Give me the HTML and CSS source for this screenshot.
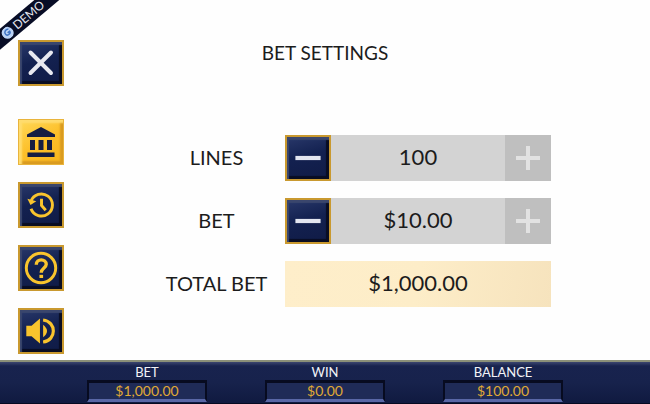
FILE: index.html
```html
<!DOCTYPE html>
<html lang="en">
<head>
    <meta charset="utf-8">
    <meta name="viewport" content="width=device-width, initial-scale=1">
    <title>Bet Settings</title>
    <link rel="stylesheet" href="styles.css">
</head>
<body>
    <div class="ribbon">
        <svg width="12" height="12" viewBox="0 0 12 12"><circle cx="6" cy="6" r="6" fill="#b9d2f5"/><path d="M9 3.500C6.500 1.500 3 3.500 3.500 6C4 9 8.500 8.500 8.500 6H6" fill="none" stroke="#3f74c4" stroke-width="1.500"/></svg>
        <span>DEMO</span>
    </div>

    <div class="stage">
        <nav class="menu">
            <button type="button" class="key close" aria-label="Close">
                <svg viewBox="0 0 40 40"><path d="M10 10L29.500 29.500M29.500 10L10 29.500" stroke="#e8e9f0" stroke-width="3.800" stroke-linecap="round"/></svg>
            </button>
            <button type="button" class="key active" aria-label="Bet settings">
                <svg viewBox="0 0 40 40" fill="#151d42"><path d="M20 5L34 12.500V15H6V12.500zM9 18h5v10H9zM17.500 18h5v10h-5zM26 18h5v10h-5zM6.500 30.500h27V35h-27z"/></svg>
            </button>
            <button type="button" class="key" aria-label="History">
                <svg viewBox="0 0 40 40" fill="none" stroke="#f9c42d" stroke-width="2.800"><path d="M10.500 16.500A10.500 10.500 0 1 1 10.500 23.500"/><path d="M20.500 14V20.500L24.500 25"/><path d="M7 14L10 20L15.500 16.500z" fill="#f9c42d" stroke="none"/></svg>
            </button>
            <button type="button" class="key" aria-label="Help">
                <svg viewBox="0 0 40 40" fill="none" stroke="#f9c42d"><circle cx="20" cy="20" r="14" stroke-width="2.800"/><path d="M15.500 17C15.500 10.500 25 11 25 16.500C25 20 20.200 20 20.200 24.500" stroke-width="3.200"/><path d="M18.500 26.500h3.500v3h-3.500z" fill="#f9c42d" stroke="none"/></svg>
            </button>
            <button type="button" class="key" aria-label="Sound">
                <svg viewBox="0 0 40 40" fill="#f9c42d"><path d="M6 15H11L19 8V32L11 25H6z"/><path d="M22 14Q29.500 20 22 26z"/><path d="M22 9.500C35 11 35 29 22 30.500" fill="none" stroke="#f9c42d" stroke-width="3"/></svg>
            </button>
        </nav>

        <main class="panel">
            <h1>BET SETTINGS</h1>
            <div class="settings">
                <label for="lines">LINES</label>
                <div class="stepper">
                    <button type="button" class="key" aria-label="Fewer lines">
                        <svg viewBox="0 0 40 40"><path d="M8 20H32" stroke="#e3e6f0" stroke-width="4"/></svg>
                    </button>
                    <output id="lines">100</output>
                    <button type="button" class="plus" aria-label="More lines" disabled>
                        <svg viewBox="0 0 40 40"><path d="M8 20H32M20 8V32" stroke="#e2e2e2" stroke-width="4"/></svg>
                    </button>
                </div>
                <label for="bet">BET</label>
                <div class="stepper">
                    <button type="button" class="key" aria-label="Lower bet">
                        <svg viewBox="0 0 40 40"><path d="M8 20H32" stroke="#e3e6f0" stroke-width="4"/></svg>
                    </button>
                    <output id="bet">$10.00</output>
                    <button type="button" class="plus" aria-label="Higher bet" disabled>
                        <svg viewBox="0 0 40 40"><path d="M8 20H32M20 8V32" stroke="#e2e2e2" stroke-width="4"/></svg>
                    </button>
                </div>
                <label for="total">TOTAL BET</label>
                <output id="total" class="total">$1,000.00</output>
            </div>
        </main>
    </div>

    <footer class="meters">
        <div class="meter"><span>BET</span><strong>$1,000.00</strong></div>
        <div class="meter"><span>WIN</span><strong>$0.00</strong></div>
        <div class="meter"><span>BALANCE</span><strong>$100.00</strong></div>
    </footer>
</body>
</html>
```

FILE: styles.css
```css
* {box-sizing: border-box;padding: 0;margin: 0;}
body {
    display: flex;
    flex-direction: column;
    min-height: 100vh;
    overflow-x: hidden;
    background: #fefefe;
    color: #1c1c1c;
    font-family: Lato, "Liberation Sans", sans-serif;
}
button {border: 0;font: inherit;}
svg {display: block;}

.ribbon {
    position: absolute;
    top: 12px;
    left: -27px;
    display: flex;
    align-items: center;
    justify-content: center;
    gap: 3px;
    width: 100px;
    height: 16px;
    background: #080d26;
    color: #e4e6ee;
    font-size: 12px;
    line-height: 16px;
    transform: rotate(-40deg);
}

.stage {display: flex;flex: 1;}
.menu {display: flex;flex-direction: column;gap: 17px;padding: 40px 18px 6px;}
.menu .close {margin-bottom: 16px;}

.key {
    width: 46px;
    height: 46px;
    border: 2px solid #c9992f;
    background: linear-gradient(165deg, #29386a, #132150 45%, #101b46);
    box-shadow: inset 2px 3px 1px #3a466d, inset -3px -3px 1px #090d22;
    cursor: pointer;
}
.key svg {width: 100%;height: 100%;}
.key.active {
    padding: 2px;
    border: 1px solid #e9b43c;
    background: linear-gradient(150deg, #ffd95a, #fdc02a 50%, #f8b51c);
    box-shadow: inset 3px 3px 2px #ffdc6e, inset -3px -3px 2px #d99a20;
}

.panel {flex: 1;padding-right: 82px;}
h1 {padding-top: 40px;font-size: 19px;font-weight: 400;line-height: 26px;text-align: center;}
.settings {
    display: grid;
    grid-template-columns: 34% 66%;
    grid-auto-rows: 46px;
    row-gap: 17px;
    align-items: center;
    margin: 69px 17px 0 66px;
    font-size: 22px;
    text-align: center;
}
.settings label {font-size: 20px;line-height: 44px;height: 46px;}
.stepper {display: flex;height: 46px;background: #d3d3d3;}
.stepper output {flex: 1;line-height: 44px;}
.plus {width: 46px;height: 46px;padding: 3px;background: #bfbfbf;}
.total {height: 46px;line-height: 44px;background: linear-gradient(100deg, #feeeca, #fdedc8 50%, #f6e3bd);}

.meters {
    display: flex;
    justify-content: center;
    gap: 58px;
    height: 44px;
    padding-top: 3px;
    border-top: 2px solid #8b9079;
    border-bottom: 1px solid #050a22;
    background: linear-gradient(#3c466f, #18234e 4px, #17224c 50%, #101a40);
}
.meter {display: flex;flex-direction: column;width: 120px;text-align: center;}
.meter span {height: 15px;color: #f2f3f8;font-size: 13px;line-height: 14px;}
.meter strong {
    height: 22px;
    border: 2px solid #070b20;
    border-width: 3px 2px 3px 2px;
    border-bottom-color: #5967a6;
    background: #1f2b57;
    color: #e0aa35;
    font-size: 14px;
    font-weight: 400;
    line-height: 16px;
}
```
